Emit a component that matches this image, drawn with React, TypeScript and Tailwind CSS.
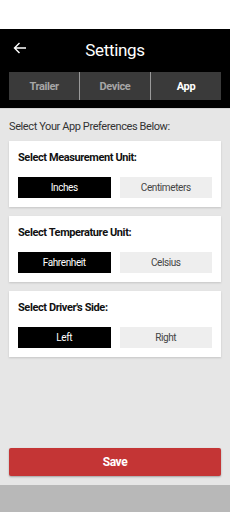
import { useState } from 'react'

const sections = [
  { title: 'Select Measurement Unit:', options: ['Inches', 'Centimeters'] },
  { title: 'Select Temperature Unit:', options: ['Fahrenheit', 'Celsius'] },
  { title: "Select Driver's Side:", options: ['Left', 'Right'] },
]

export default function App() {
  const [tab, setTab] = useState('App')
  const [picked, setPicked] = useState<number[]>([0, 0, 0])

  return (
    <div className="w-[230px] h-[512px] flex flex-col bg-[#e6e6e6] font-['Roboto',sans-serif] tracking-[-0.025em]">
      <div className="h-[29px] bg-white" />
      <div className="bg-black h-[79px] flex flex-col px-[9px]">
        <div className="relative h-[43px] flex items-center justify-center">
          <svg className="absolute left-[4px] top-[13px]" width="14" height="12" viewBox="0 0 14 12" fill="none" stroke="white" strokeWidth="1.4">
            <path d="M13 6H1.5M6.5 1L1.5 6l5 5" />
          </svg>
          <span className="text-white text-[17px] leading-none tracking-[-0.02em]">Settings</span>
        </div>
        <div className="flex h-[28px] gap-px bg-[#9a9a9a]">
          {['Trailer', 'Device', 'App'].map(t => (
            <button
              key={t}
              onClick={() => setTab(t)}
              className={`flex-1 bg-[#3a3a3a] text-[11px] font-bold pt-[2px] ${tab === t ? 'text-white' : 'text-[#a6a6a6]'}`}
            >
              {t}
            </button>
          ))}
        </div>
      </div>
      <div className="h-px bg-[#d4d4d4]" />
      <div className="flex-1 flex flex-col px-[9px]">
        <p className="text-[11px] text-[#333] mt-[11px] mb-[7px] leading-[14px]">Select Your App Preferences Below:</p>
        <div className="flex flex-col gap-[9px]">
          {sections.map((s, i) => (
            <div key={s.title} className="bg-white h-[66px] px-[9px] pt-[10px] shadow-[0_1px_2px_rgba(0,0,0,0.15)]">
              <p className="text-[11px] font-bold text-[#111] leading-[14px]">{s.title}</p>
              <div className="flex gap-[9px] mt-[12px]">
                {s.options.map((o, j) => (
                  <button
                    key={o}
                    onClick={() => setPicked(p => p.map((v, k) => (k === i ? j : v)))}
                    className={`flex-1 h-[21px] text-[10px] ${picked[i] === j ? 'bg-black text-white' : 'bg-[#eeeeee] text-[#444]'}`}
                  >
                    {o}
                  </button>
                ))}
              </div>
            </div>
          ))}
        </div>
        <div className="flex-1" />
        <button className="h-[28px] mb-[9px] bg-[#c43535] text-white text-[12px] font-bold rounded-[2px] shadow-[0_1px_2px_rgba(0,0,0,0.3)]">
          Save
        </button>
      </div>
      <div className="h-[27px] bg-[#b8b8b8]" />
    </div>
  )
}
